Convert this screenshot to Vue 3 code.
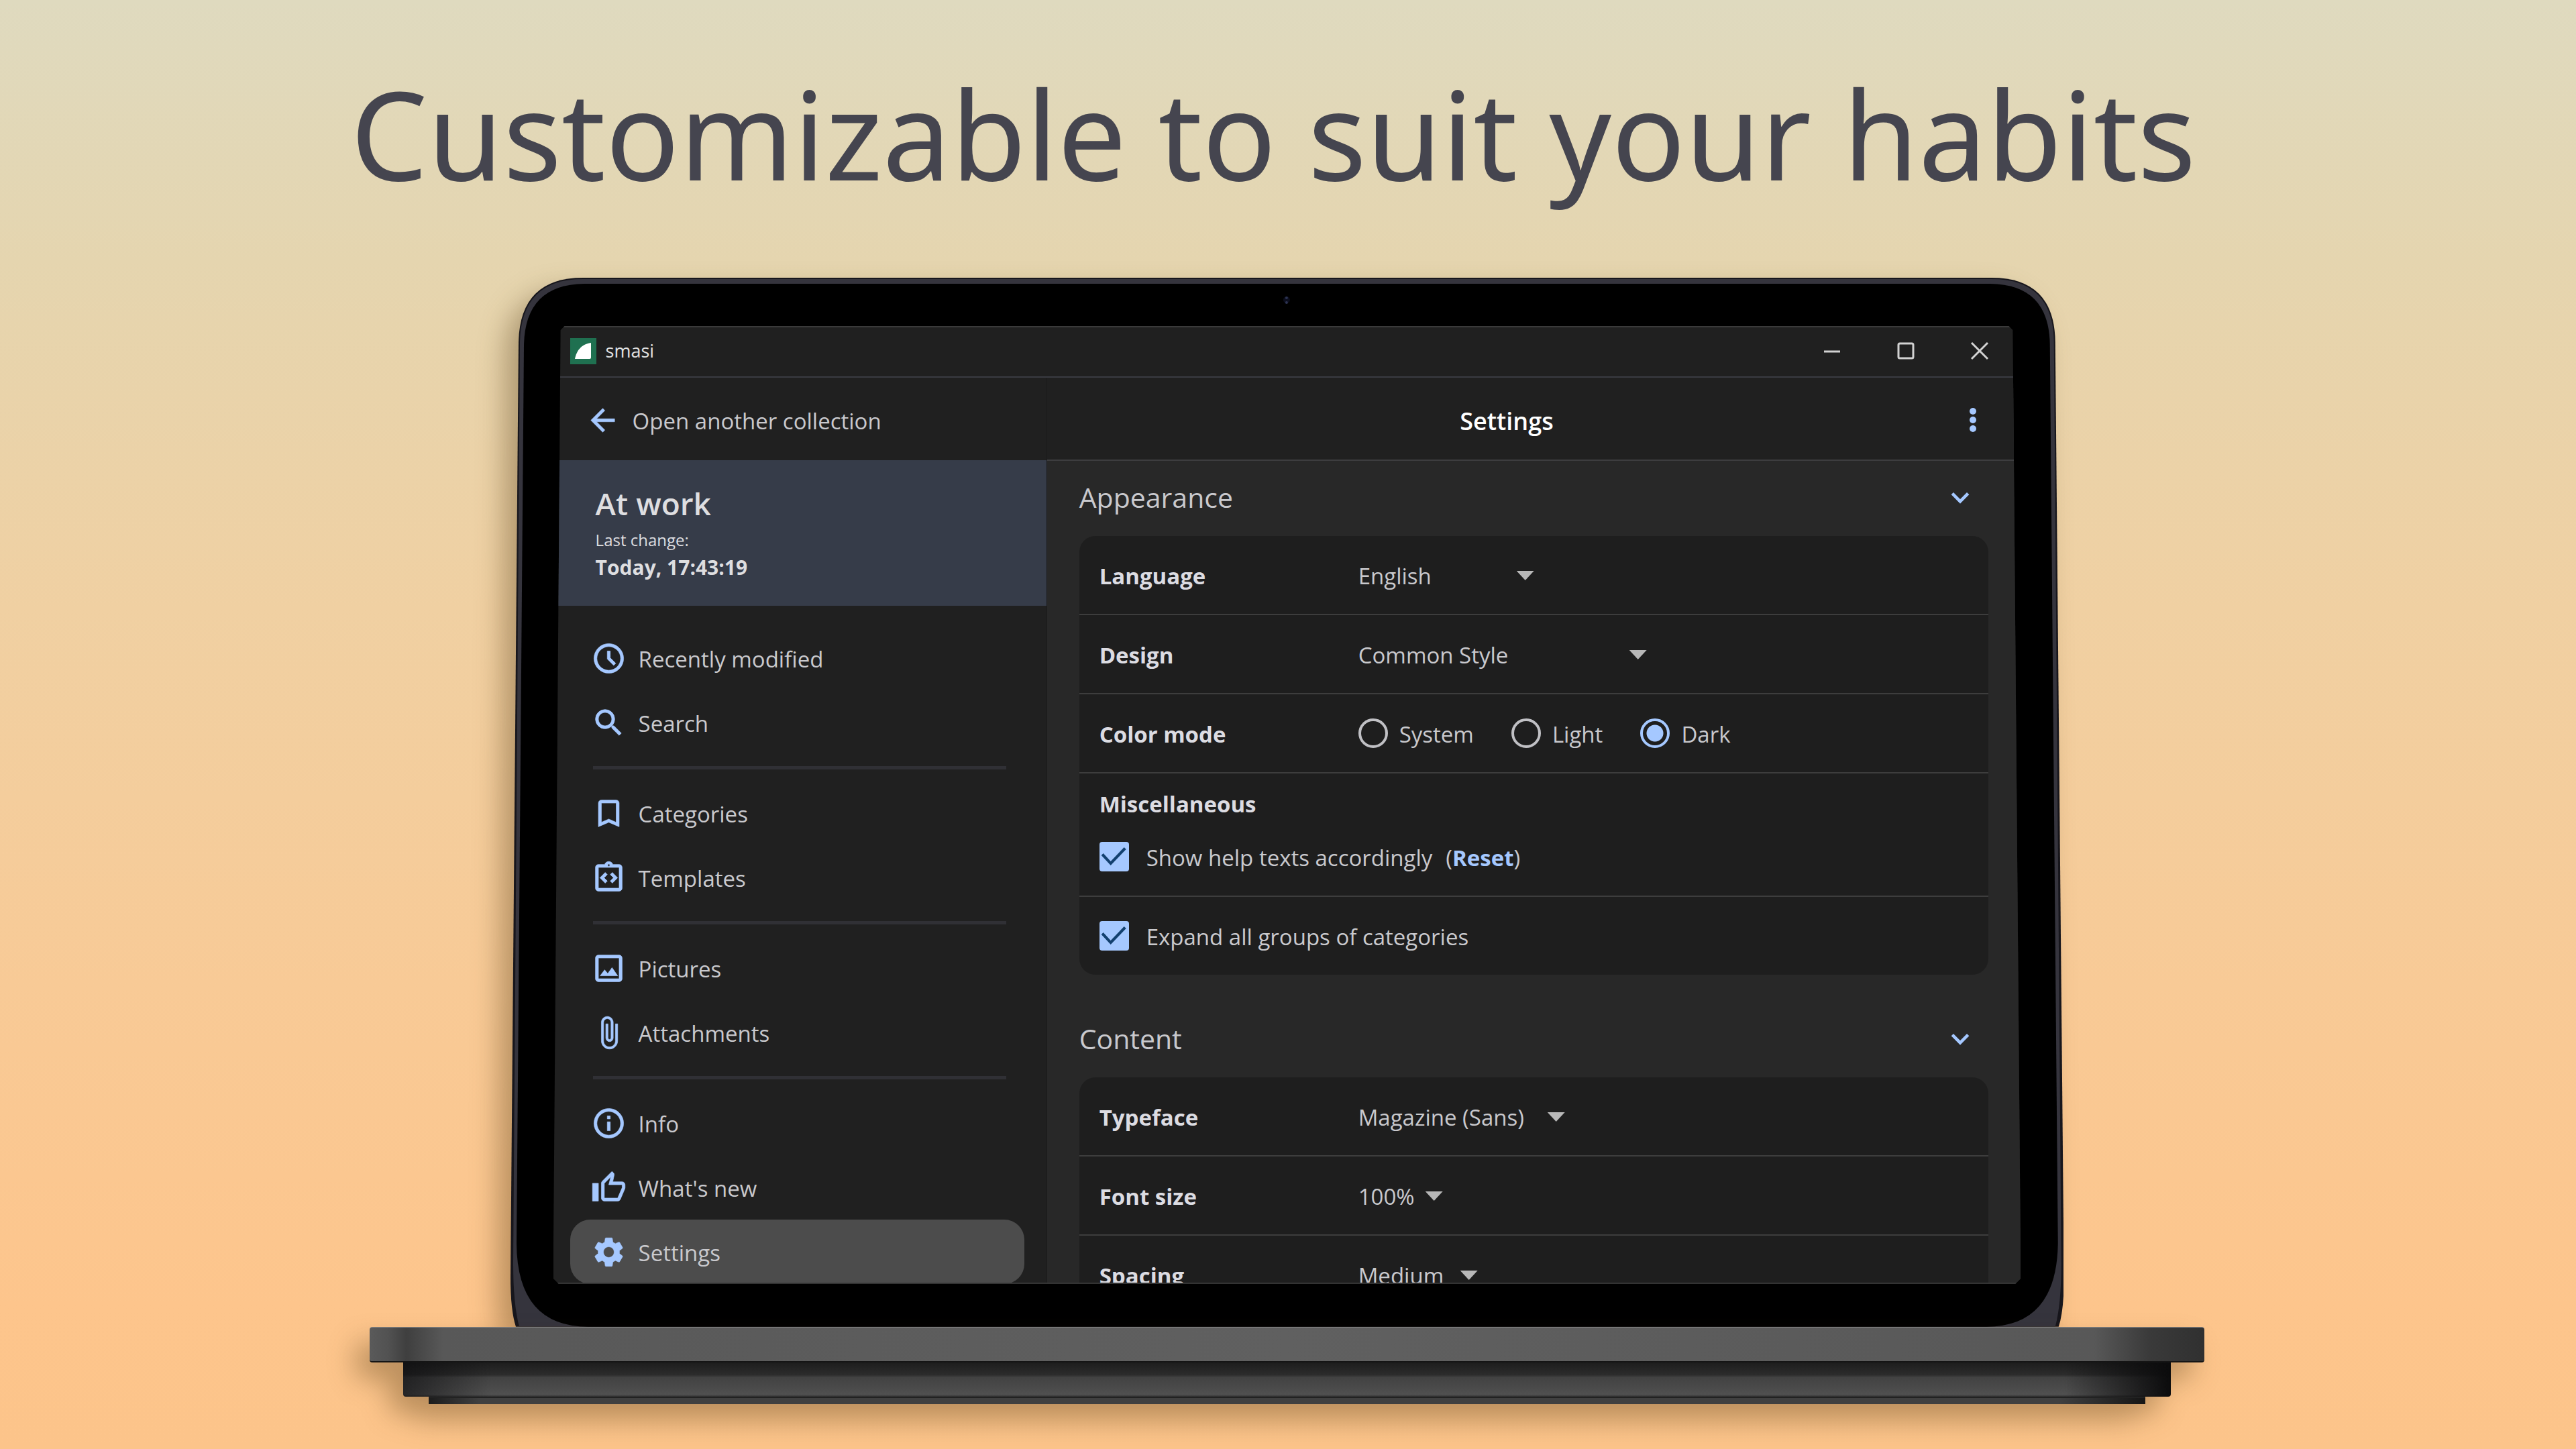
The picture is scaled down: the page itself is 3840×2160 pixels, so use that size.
<template>
  <div class="page">
    <h1 class="headline">Customizable to suit your habits</h1>

    <div class="laptop">
      <div class="lid">
        <svg class="lid-shape" viewBox="0 0 2316 1564" preserveAspectRatio="none" aria-hidden="true">
          <path fill="#17161c" d="M108 0H2208Q2302 0 2303 96L2316 1490Q2316 1540 2308 1564H8Q0 1540 0 1490L12 96Q14 0 108 0Z" />
          <path fill="#35343d" d="M108 2H2208Q2300 2 2301 96L2312 1470Q2312 1530 2303 1564H13Q4 1530 4 1470L14 96Q16 2 108 2Z" />
          <path fill="#000" d="M110 9H2206Q2294 10 2295 100L2307 1440Q2305 1564 2200 1564H116Q10 1564 9 1440L20 100Q22 10 110 9Z" />
          <circle cx="1157" cy="33" r="5" fill="#0b0d1c" />
          <circle cx="1157" cy="30" r="2" fill="#2c3352" />
          <circle cx="1157" cy="37" r="2" fill="#2c3352" />
        </svg>

        <div class="screen">
          <div class="titlebar">
            <svg class="logo" viewBox="0 0 39 39" aria-hidden="true">
              <rect width="39" height="39" fill="#1f7050" />
              <path fill="#fff" d="M7 31C9 20 16 9 31 7v22q0 2-2 2z" />
            </svg>
            <span class="app-name">smasi</span>
            <div class="window-buttons">
              <button type="button" aria-label="Minimize">
                <svg viewBox="0 0 28 28"><path d="M2 15h24" /></svg>
              </button>
              <button type="button" aria-label="Maximize">
                <svg viewBox="0 0 28 28"><rect x="3" y="3" width="22" height="22" rx="2" /></svg>
              </button>
              <button type="button" aria-label="Close">
                <svg viewBox="0 0 28 28"><path d="M2 2l24 24M26 2L2 26" /></svg>
              </button>
            </div>
          </div>

          <div class="body">
            <aside class="sidebar">
              <a class="back" href="#">
                <svg class="icon" viewBox="0 0 24 24" aria-hidden="true"><path :d="icons.back" /></svg>
                <span class="text">Open another collection</span>
              </a>
              <div class="collection">
                <h2>At work</h2>
                <p class="changed">Last change:</p>
                <p class="changed-at">Today, 17:43:19</p>
              </div>
              <nav>
                <ul v-for="(group, i) in groups" :key="i">
                  <li v-for="item in group" :key="item.label">
                    <a href="#" :class="{ active: item.label === current }" @click.prevent="current = item.label">
                      <svg class="icon" viewBox="0 0 24 24" aria-hidden="true">
                        <path fill-rule="evenodd" :d="icons[item.icon]" />
                      </svg>
                      <span class="text">{{ item.label }}</span>
                    </a>
                  </li>
                </ul>
              </nav>
            </aside>

            <main class="main">
              <header class="main-header">
                <h2>Settings</h2>
                <button type="button" class="more" aria-label="More">
                  <svg viewBox="0 0 12 40">
                    <circle cx="6" cy="7" r="5" /><circle cx="6" cy="20" r="5" /><circle cx="6" cy="33" r="5" />
                  </svg>
                </button>
              </header>

              <div class="sections">
                <section>
                  <button type="button" class="section-head">
                    Appearance
                    <svg viewBox="0 0 24 18"><path d="M2 4l10 10L22 4" /></svg>
                  </button>
                  <div class="card">
                    <div v-for="field in appearance" :key="field.id" class="row">
                      <label class="name text" :for="field.id">{{ field.label }}</label>
                      <span class="select text" :style="{ width: field.width + 'px' }">
                        <select :id="field.id">
                          <option>{{ field.value }}</option>
                        </select>
                      </span>
                    </div>
                    <div class="row" role="radiogroup" aria-labelledby="mode">
                      <span id="mode" class="name text">Color mode</span>
                      <label v-for="mode in modes" :key="mode" class="radio">
                        <input v-model="colorMode" type="radio" name="mode" :value="mode" />
                        <span class="text">{{ mode }}</span>
                      </label>
                    </div>
                    <div class="row row--stacked">
                      <h3 class="name">Miscellaneous</h3>
                      <div class="option">
                        <label class="check">
                          <input v-model="helpTexts" type="checkbox" />
                          <span class="text">Show help texts accordingly</span>
                        </label>
                        <span class="text">(<a class="reset" href="#">Reset</a>)</span>
                      </div>
                    </div>
                    <div class="row">
                      <label class="check">
                        <input v-model="expandGroups" type="checkbox" />
                        <span class="text">Expand all groups of categories</span>
                      </label>
                    </div>
                  </div>
                </section>

                <section>
                  <button type="button" class="section-head">
                    Content
                    <svg viewBox="0 0 24 18"><path d="M2 4l10 10L22 4" /></svg>
                  </button>
                  <div class="card">
                    <div v-for="field in content" :key="field.id" class="row">
                      <label class="name text" :for="field.id">{{ field.label }}</label>
                      <span class="select text" :style="{ width: field.width + 'px' }">
                        <select :id="field.id">
                          <option>{{ field.value }}</option>
                        </select>
                      </span>
                    </div>
                  </div>
                </section>
              </div>
            </main>
          </div>
        </div>
      </div>

      <div class="base">
        <div class="deck"></div>
        <div class="under"></div>
        <div class="foot"></div>
      </div>
    </div>
  </div>
</template>

<script setup>
import { ref } from "vue";

const current = ref("Settings");
const colorMode = ref("Dark");
const helpTexts = ref(true);
const expandGroups = ref(true);

const modes = ["System", "Light", "Dark"];

const groups = [
  [
    { label: "Recently modified", icon: "clock" },
    { label: "Search", icon: "search" },
  ],
  [
    { label: "Categories", icon: "bookmark" },
    { label: "Templates", icon: "template" },
  ],
  [
    { label: "Pictures", icon: "picture" },
    { label: "Attachments", icon: "clip" },
  ],
  [
    { label: "Info", icon: "info" },
    { label: "What's new", icon: "thumb" },
    { label: "Settings", icon: "gear" },
  ],
];

const appearance = [
  { id: "language", label: "Language", value: "English", width: 262 },
  { id: "design", label: "Design", value: "Common Style", width: 430 },
];

const content = [
  { id: "typeface", label: "Typeface", value: "Magazine (Sans)", width: 308 },
  { id: "font-size", label: "Font size", value: "100%", width: 126 },
  { id: "spacing", label: "Spacing", value: "Medium", width: 178 },
];

const icons = {
  back: "M20 11H7.83l5.59-5.59L12 4l-8 8 8 8 1.41-1.41L7.83 13H20v-2z",
  clock:
    "M12 2a10 10 0 1 0 0 20 10 10 0 0 0 0-20zm0 18a8 8 0 1 1 0-16 8 8 0 0 1 0 16zM15.3 16.7l1.4-1.4-3.7-3.7V7h-2v5.4z",
  search:
    "M15.5 14h-.79l-.28-.27A6.47 6.47 0 0 0 16 9.5 6.5 6.5 0 1 0 9.5 16c1.61 0 3.09-.59 4.23-1.57l.27.28v.79l5 4.99L20.49 19l-4.99-5zm-6 0C7.01 14 5 11.99 5 9.5S7.01 5 9.5 5 14 7.01 14 9.5 11.99 14 9.5 14z",
  bookmark: "M17 3H7c-1.1 0-2 .9-2 2v16l7-3 7 3V5c0-1.1-.9-2-2-2zm0 15l-5-2.18L7 18V5h10v13z",
  template:
    "M19 3h-4.18C14.4 1.84 13.3 1 12 1s-2.4.84-2.82 2H5c-1.1 0-2 .9-2 2v14c0 1.1.9 2 2 2h14c1.1 0 2-.9 2-2V5c0-1.1-.9-2-2-2zm-7-.25a.75.75 0 1 1 0 1.5.75.75 0 0 1 0-1.5zM19 19H5V5h14v14zM11 14.17L8.83 12 11 9.83 9.59 8.41 6 12l3.59 3.59zM14.41 15.59L18 12l-3.59-3.59L13 9.83 15.17 12 13 14.17z",
  picture:
    "M19 3H5c-1.1 0-2 .9-2 2v14c0 1.1.9 2 2 2h14c1.1 0 2-.9 2-2V5c0-1.1-.9-2-2-2zm0 16H5V5h14v14zM6.2 17l3-4 2.1 2.5 2.9-4L18 17z",
  clip: "M16.5 6v11.5c0 2.21-1.79 4-4 4s-4-1.79-4-4V5a2.5 2.5 0 0 1 5 0v10.500a1 1 0 0 1-2 0V6H10v9.5a2.5 2.5 0 0 0 5 0V5c0-2.21-1.79-4-4-4S7 2.79 7 5v12.500c0 3.04 2.46 5.5 5.5 5.5s5.5-2.46 5.5-5.5V6h-1.5z",
  info: "M11 7h2v2h-2zm0 4h2v6h-2zm1-9a10 10 0 1 0 0 20 10 10 0 0 0 0-20zm0 18a8 8 0 1 1 0-16 8 8 0 0 1 0 16z",
  thumb:
    "M9 21h9c.83 0 1.54-.5 1.84-1.22l3.02-7.05c.09-.23.14-.47.14-.73v-2c0-1.1-.9-2-2-2h-6.31l.95-4.57.03-.32c0-.41-.17-.79-.44-1.06L14.17 1 7.58 7.590C7.22 7.95 7 8.45 7 9v10c0 1.1.9 2 2 2zM9 9l4.34-4.34L12 10h9v2l-3 7H9V9zM1 9h4v12H1z",
  gear: "M19.14 12.94c.04-.3.06-.61.06-.94 0-.32-.02-.64-.07-.94l2.03-1.58a.49.49 0 0 0 .12-.61l-1.92-3.32a.488.488 0 0 0-.59-.22l-2.39.96c-.5-.38-1.03-.7-1.62-.94l-.36-2.54a.484.484 0 0 0-.48-.41h-3.84c-.24 0-.43.17-.47.41l-.36 2.54c-.59.24-1.13.57-1.62.94l-2.39-.96c-.22-.08-.47 0-.59.22L2.74 8.87c-.12.21-.08.47.12.61l2.03 1.58c-.05.3-.09.63-.09.94s.02.64.07.94l-2.03 1.58a.49.49 0 0 0-.12.61l1.92 3.32c.12.22.37.29.59.22l2.39-.96c.5.38 1.03.7 1.62.94l.36 2.54c.05.24.24.41.48.41h3.84c.24 0 .44-.17.47-.41l.36-2.54c.59-.24 1.13-.56 1.62-.94l2.39.96c.22.08.47 0 .59-.22l1.92-3.32c.12-.22.07-.47-.12-.61l-2.01-1.58zM12 15.6c-1.98 0-3.6-1.62-3.6-3.6s1.62-3.6 3.6-3.6 3.6 1.62 3.6 3.6-1.62 3.6-3.6 3.6z",
};
</script>

<style>
body {
  margin: 0;
}
</style>

<style scoped>
.page {
  min-height: 100vh;
  display: flex;
  flex-direction: column;
  align-items: center;
  box-sizing: border-box;
  overflow: hidden;
  background: linear-gradient(#dfdabf, #e5d5af 18%, #f0d0a2 42%, #f8ca96 68%, #fdc58c 90%, #fcc48a);
  font-family: "Open Sans", "Noto Sans", sans-serif;
  font-size: 33px;
  line-height: 44px;
  color: #c9c9cd;
}

h1,
h2,
h3,
p,
ul {
  margin: 0;
  padding: 0;
}

button,
select {
  font: inherit;
  color: inherit;
  background: none;
  border: none;
  padding: 0;
}

a {
  color: inherit;
  text-decoration: none;
}

/* labels sit a touch below the centre of their icons */
.text {
  padding-top: 4px;
}

.headline {
  margin: 74px 44px 92px 0;
  font-family: "Noto Sans", sans-serif;
  font-size: 182px;
  line-height: 248px;
  font-weight: 400;
  color: #45454f;
  text-align: center;
}

/* laptop */
.laptop {
  width: 71.2%;
  margin-right: 3px;
  display: flex;
  flex-direction: column;
  align-items: center;
}

.lid {
  position: relative;
  display: flex;
  width: 84.7%;
  min-height: 0;
  aspect-ratio: 2316 / 1564;
  box-sizing: border-box;
  padding: 72px 64px 64px;
}

.lid-shape {
  position: absolute;
  inset: 0;
  width: 100%;
  height: 100%;
  filter: drop-shadow(-20px 20px 20px rgba(70, 45, 10, 0.35));
}

.base {
  position: relative;
  width: 100%;
  display: flex;
  flex-direction: column;
  align-items: center;
  filter: drop-shadow(-20px 24px 20px rgba(70, 45, 10, 0.35));
}

.deck {
  width: 100%;
  height: 53px;
  box-sizing: border-box;
  border-top: 1px solid #858585;
  border-bottom: 2px solid #151515;
  border-radius: 4px;
  background: linear-gradient(90deg, #5a5a5a, #525252 1%, #3f3f3f 2%, #585858 4%, #606060 50%, #585858 94%, #3a3a3a 97%, #303030);
}

.under {
  width: 96.4%;
  height: 51px;
  border-radius: 0 0 4px 4px;
  background:
    linear-gradient(90deg, rgba(10, 10, 12, 0.6), transparent 5%, transparent 94%, #0b0b0c),
    linear-gradient(#1d1d1d, #2c2c2c 36%, #424242 44%, #505050 94%, #303030);
}

.foot {
  width: 93.6%;
  height: 11px;
  background: linear-gradient(90deg, #1c1c1c, #404040 3%, #404040 95%, #151515);
  border-top: 2px solid #222;
  box-sizing: border-box;
}

/* app window */
.screen {
  position: relative;
  flex: 1;
  min-width: 0;
  min-height: 0;
  display: flex;
  flex-direction: column;
  box-sizing: border-box;
  border-top: 2px solid #3a3a3a;
  border-bottom: 2px solid #3a3a3a;
  background: #202020;
  overflow: hidden;
  clip-path: polygon(11px 6px, 17px 0, calc(100% - 18px) 0, calc(100% - 12px) 6px, 100% calc(100% - 8px), calc(100% - 8px) 100%, 8px 100%, 0 calc(100% - 8px));
}

.titlebar {
  display: flex;
  align-items: center;
  height: 70px;
  padding: 0 35px 3px 25px;
  border-bottom: 2px solid #3a3b42;
  flex-shrink: 0;
}

.logo {
  width: 39px;
  height: 39px;
  margin-right: 14px;
}

.app-name {
  font-size: 27px;
  font-weight: 500;
  color: #e2e2e2;
}

.window-buttons {
  display: flex;
  gap: 82px;
  margin-left: auto;
  padding-right: 12px;
}

.window-buttons button {
  display: flex;
}

.window-buttons svg {
  width: 28px;
  height: 28px;
  fill: none;
  stroke: #d2d2d2;
  stroke-width: 3;
}

.body {
  flex: 1;
  min-height: 0;
  display: flex;
}

.icon {
  width: 53px;
  height: 53px;
  fill: #a5c8ff;
  stroke: #a5c8ff;
  stroke-width: 0.3;
  flex-shrink: 0;
}

.sidebar {
  width: 33.6%;
  border-right: 1px solid #1a1a1a;
  flex-shrink: 0;
}

.back {
  display: flex;
  align-items: center;
  gap: 18px;
  height: 123px;
  padding: 3px 0 0 47px;
  box-sizing: border-box;
}

.collection {
  height: 217px;
  box-sizing: border-box;
  padding: 30px 63px 0;
  background: #363c49;
  color: #dedee0;
}

.collection h2 {
  font-size: 46px;
  line-height: 68px;
  font-weight: 600;
}

.changed {
  font-size: 24px;
  line-height: 42px;
}

.changed-at {
  font-size: 30px;
  line-height: 40px;
  font-weight: 700;
}

nav {
  padding: 30px 33px 0 25px;
}

nav ul {
  list-style: none;
}

nav ul + ul::before {
  content: "";
  display: block;
  height: 5px;
  margin: 17px 27px 17px 34px;
  background: #303035;
}

nav a {
  display: flex;
  align-items: center;
  gap: 18px;
  height: 96px;
  padding: 0 31px;
  border-radius: 30px;
}

nav a.active {
  background: #4c4c4c;
}

.main {
  flex: 1;
  min-width: 0;
  background: #282828;
}

.main-header {
  display: flex;
  align-items: center;
  height: 124px;
  padding: 4px 65px 0 40px;
  box-sizing: border-box;
  background: #202020;
  border-bottom: 2px solid #3d3d3f;
}

.main-header h2 {
  flex: 1;
  padding: 4px 44px 0 0;
  font-size: 36px;
  font-weight: 600;
  color: #fff;
  text-align: center;
}

.more svg {
  display: block;
  width: 12px;
  height: 40px;
  fill: #a5c8ff;
}

.sections {
  padding: 0 48px;
}

section + section {
  margin-top: 41px;
}

.section-head {
  display: flex;
  align-items: center;
  justify-content: space-between;
  width: 100%;
  height: 112px;
  padding: 0 28px 4px 0;
  font-size: 41px;
}

.section-head svg {
  width: 28px;
  height: 21px;
  fill: none;
  stroke: #a5c8ff;
  stroke-width: 4;
}

.card {
  border-radius: 24px;
  background: #1e1e1e;
}

.row {
  display: flex;
  align-items: center;
  min-height: 116px;
  padding: 0 30px;
}

.row + .row {
  border-top: 2px solid #3d3d3d;
}

.row--stacked {
  flex-direction: column;
  align-items: flex-start;
  gap: 34px;
  padding: 24px 30px 36px;
  min-height: 0;
}

.name {
  width: 386px;
  font-size: 33px;
  font-weight: 700;
  color: #dcdce2;
}

.select {
  position: relative;
}

.select select {
  display: block;
  width: 100%;
  appearance: none;
}

.select::after {
  content: "";
  position: absolute;
  top: 18px;
  right: 0;
  width: 26px;
  height: 14px;
  background: #b8b8b8;
  clip-path: polygon(0 0, 100% 0, 50% 100%);
  pointer-events: none;
}

.radio,
.check {
  display: flex;
  align-items: center;
  height: 44px;
}

.radio {
  gap: 17px;
  margin-right: 56px;
}

.check {
  gap: 26px;
}

.radio input,
.check input {
  appearance: none;
  width: 44px;
  height: 44px;
  margin: 0;
  flex-shrink: 0;
}

.radio input {
  border: 4px solid #c0c0c4;
  border-radius: 50%;
}

.radio input:checked {
  border-color: #a5c8ff;
  background: radial-gradient(circle, #a5c8ff 12px, transparent 13px);
}

.check input {
  border: 3px solid #c0c0c4;
  border-radius: 4px;
}

.check input:checked {
  border: none;
  background: #a5c8ff;
}

.check input:checked::before {
  content: "";
  display: block;
  width: 44px;
  height: 44px;
  background: #12406f;
  clip-path: polygon(3px 20px, 6px 17px, 17px 29px, 37px 8px, 40px 11px, 17px 35px);
}

.option {
  display: flex;
  align-items: center;
  gap: 20px;
  height: 44px;
}

.reset {
  font-weight: 700;
  color: #a5c8ff;
}
</style>
